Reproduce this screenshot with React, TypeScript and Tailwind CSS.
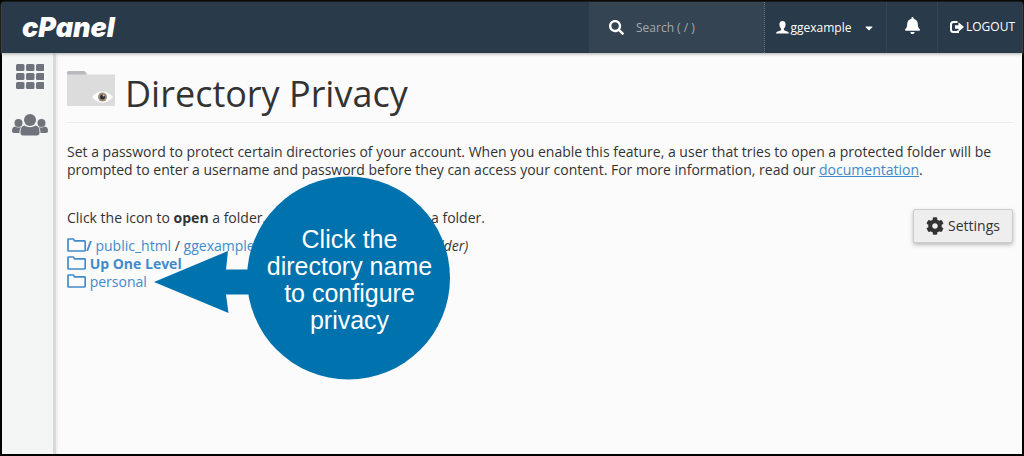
import { FaBell, FaCaretDown, FaCog, FaSearch } from 'react-icons/fa';

function GridIcon() {
    return (
        <svg viewBox="0 0 28 25" className="w-7 h-[25px]" fill="currentColor">
            {[0, 9, 18].map((y) =>
                [0, 10, 20].map((x) => (
                    <rect key={`${x}-${y}`} x={x} y={y} width="8.5" height="7" rx="1.5" />
                ))
            )}
        </svg>
    );
}

function UsersIcon() {
    return (
        <svg viewBox="0 0 36 22" className="w-9 h-[22px]" fill="currentColor">
            <circle cx="18" cy="6" r="6" />
            <circle cx="6.5" cy="9" r="4" />
            <circle cx="29.5" cy="9" r="4" />
            <path d="M12.5 11.500c3 2.200 8 2.200 11 0 3 .6 4 3 4 6V19c0 1.600-1 2.500-2.500 2.500h-14c-1.500 0-2.500-.9-2.500-2.500v-1.500c0-3 1-5.400 4-6z" />
            <path d="M3 12.500c2 1.400 4.500 1.400 6.200.5C8 14.500 7.500 16 7.500 19H2c-1.200 0-2-.7-2-2 0-2.300.8-4.200 3-4.500z" />
            <path d="M33 12.500c-2 1.400-4.500 1.400-6.200.5 1.200 1.500 1.700 3 1.700 6H34c1.200 0 2-.7 2-2 0-2.300-.8-4.200-3-4.500z" />
        </svg>
    );
}

function UserIcon() {
    return (
        <svg viewBox="0 0 13 13" className="w-[13px] h-[13px]" fill="currentColor">
            <path d="M6.500 0C4.300 0 3.300 1.500 3.400 3.600c.1 1.800.8 3.200 1.700 4.200v1.100C4.800 9.800 0 10 0 12.500h13c0-2.500-4.800-2.700-5.100-3.600V7.800c.9-1 1.600-2.400 1.700-4.200C9.700 1.500 8.700 0 6.500 0z" />
        </svg>
    );
}

function LogoutIcon() {
    return (
        <svg viewBox="0 0 14 12" className="w-3.5 h-3" fill="none" stroke="currentColor">
            <path d="M7.500 1H3.500Q1 1 1 3.500v5Q1 11 3.500 11h4.500V9.500" strokeWidth="2" />
            <path d="M8.500 1.300 14 6l-5.500 4.700V7.800H5V4.200h3.500z" fill="currentColor" stroke="none" />
        </svg>
    );
}

function FolderIcon() {
    return (
        <svg
            viewBox="0 0 19 14"
            className="inline-block w-[19px] h-3.5 align-[-1px]"
            fill="none"
            stroke="currentColor"
            strokeWidth="1.7"
            strokeLinejoin="round"
        >
            <path d="M1 12.500V1.500Q1 1 1.500 1H6q.8 0 1 .8l.4 1h9.800q1 0 1 1v8.200q0 1-1 1H1.500q-.5 0-.5-.5z" />
        </svg>
    );
}

function PrivacyIcon() {
    return (
        <svg viewBox="0 0 48 35" className="w-12 h-[35px] shrink-0">
            <path d="M0 4V1.500Q0 0 1.500 0H17q1.500 0 2 1.500L20 4z" fill="#b9b9c0" />
            <path d="M0 3.500h48V34q0 1-1 1H1q-1 0-1-1z" fill="#dcdcdc" />
            <path d="M25 26q10-11.500 21 0-11 11.500-21 0z" fill="#fff" />
            <circle cx="35.500" cy="26" r="4.500" fill="#a08c74" />
            <circle cx="35.500" cy="26" r="2.500" fill="#26303c" />
            <circle cx="36.500" cy="24.500" r="1" fill="#d8cdbd" />
        </svg>
    );
}

function Callout() {
    return (
        <div className="absolute left-[87px] -top-[33px] w-[296px] h-[204px] font-['Liberation_Sans',sans-serif]">
            <svg viewBox="0 0 296 204" className="absolute inset-0 w-full h-full" fill="#0072ad">
                <circle cx="194.500" cy="102" r="101.500" />
                <path d="M0 106 74 75l-2 18.500h40v25H72L74.500 137z" />
            </svg>
            <p className="absolute right-0 top-[50px] w-[201px] text-center text-[25px] leading-[27px] text-white">
                Click the
                <br />
                directory name
                <br />
                to configure
                <br />
                privacy
            </p>
        </div>
    );
}

export default function App() {
    return (
        <div className="flex flex-col min-h-screen border-2 border-black bg-[#fbfbfb] text-[#333] text-sm leading-[18px] font-['Open_Sans',sans-serif]">
            <header className="relative z-10 flex h-[51px] bg-[#293a4a] text-white text-xs shadow-[0_1px_3px_#aaa]">
                <a
                    href="#home"
                    className="flex items-center pl-5 mr-auto text-[27px] font-black italic font-['Inter',sans-serif]"
                >
                    cPanel
                </a>
                <label className="flex items-center w-[176px] pl-5 gap-3 bg-[#354453] border-r border-dotted border-[#66717d]">
                    <FaSearch className="w-[15px] h-[15px] shrink-0" />
                    <input
                        type="text"
                        aria-label="Search"
                        placeholder="Search ( / )"
                        className="w-full min-w-0 bg-transparent text-xs placeholder:text-[#a5a8ad] outline-none"
                    />
                </label>
                <button className="flex items-center justify-center w-[122px] border-r border-[#354453]">
                    <UserIcon />
                    <span className="ml-0.5 mr-3">ggexample</span>
                    <FaCaretDown className="w-3 h-3" />
                </button>
                <button
                    aria-label="Notifications"
                    className="flex items-center justify-center w-[51px] pb-1 border-r border-[#354453]"
                >
                    <FaBell className="w-[17px] h-[17px]" />
                </button>
                <a href="#logout" className="flex items-center justify-end w-[84px] pr-[7px] pb-0.5 gap-0.5">
                    <LogoutIcon />
                    LOGOUT
                </a>
            </header>
            <div className="flex flex-1">
                <nav className="flex flex-col items-center w-[54px] pt-[11px] gap-[25px] bg-[#f4f6f6] text-[#6f737b] border-r-3 border-[#d9d9da] shadow-[2px_0_0_#f0f0f0]">
                    <a href="#tools" aria-label="Tools" className="pl-1">
                        <GridIcon />
                    </a>
                    <a href="#users" aria-label="User manager" className="pl-1">
                        <UsersIcon />
                    </a>
                </nav>
                <main className="flex-1 pl-[11px] pr-[9px] pt-[18px]">
                    <div className="flex items-start gap-2.5 h-[52px] border-b border-[#eaeaea]">
                        <PrivacyIcon />
                        <h1 className="text-4xl leading-[46px]">Directory Privacy</h1>
                    </div>
                    <p className="mt-5">
                        Set a password to protect certain directories of your account. When you enable this
                        feature, a user that tries to open a protected folder will be prompted to enter a username
                        and password before they can access your content. For more information, read our{' '}
                        <a href="#documentation" className="text-[#428bca] underline">
                            documentation
                        </a>
                        .
                    </p>
                    <div className="relative flex items-start justify-between mt-[30px]">
                        <div>
                            <p>
                                Click the icon to <b>open</b> a folder. Click the name to <b>select</b> a folder.
                            </p>
                            <ul className="mt-2.5 text-[#428bca]">
                                <li>
                                    <a href="#root">
                                        <FolderIcon />
                                        <b>/</b>
                                    </a>{' '}
                                    <a href="#public_html">public_html</a> <span className="text-[#333]">/</span>{' '}
                                    <a href="#ggexample">ggexample.com</a>{' '}
                                    <span className="text-[#333]">
                                        / <i className="ml-18">(Current Folder)</i>
                                    </span>
                                </li>
                                <li>
                                    <a href="#up">
                                        <FolderIcon /> <b>Up One Level</b>
                                    </a>
                                </li>
                                <li>
                                    <a href="#personal">
                                        <FolderIcon /> personal
                                    </a>
                                </li>
                            </ul>
                        </div>
                        <button className="flex items-center justify-center w-[100px] h-[34px] gap-1 border border-[#ccc] rounded-xs bg-[#eee] shadow-[0_2px_4px_#bbb]">
                            <FaCog className="w-[18px] h-[18px]" />
                            Settings
                        </button>
                        <Callout />
                    </div>
                </main>
            </div>
        </div>
    );
}
